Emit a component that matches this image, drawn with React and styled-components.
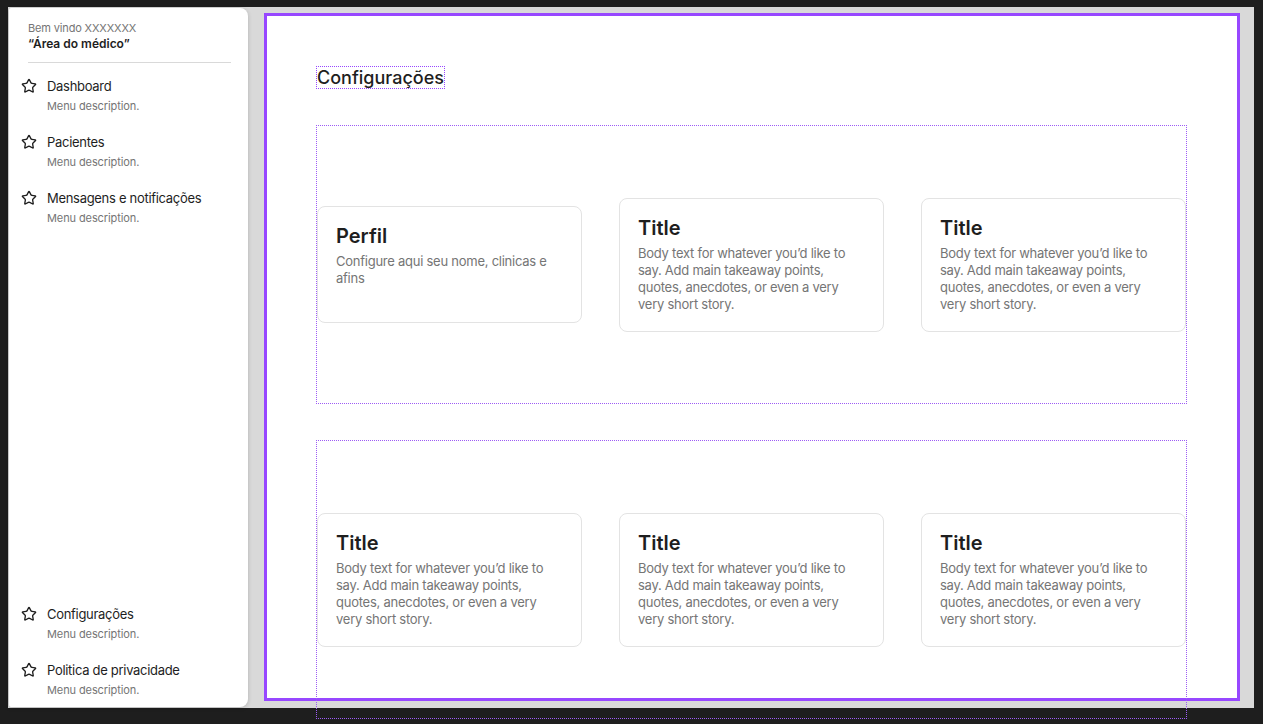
import React from "react";
import styled, { createGlobalStyle, css } from "styled-components";
import { Star } from "lucide-react";

const GlobalStyle = createGlobalStyle`
  html, body {
    margin: 0;
    padding: 0;
    background: #1e1e1e;
    min-height: 100vh;
  }
  body {
    font-family: Inter, "Noto Sans", sans-serif;
    color: #1e1e1e;
  }
  #root {
    min-height: 100vh;
    padding: 7px 0 0 8px;
  }
  * { box-sizing: border-box; }
`;

// crisp 1px-on / 1px-off selection outline, like the design tool draws it
const dotted = (c) => css`
  padding: 1px;
  background:
    repeating-linear-gradient(90deg, ${c} 0 1px, transparent 1px 2px) top left / 100% 1px no-repeat,
    repeating-linear-gradient(90deg, ${c} 0 1px, transparent 1px 2px) bottom left / 100% 1px no-repeat,
    repeating-linear-gradient(180deg, ${c} 0 1px, transparent 1px 2px) top left / 1px 100% no-repeat,
    repeating-linear-gradient(180deg, ${c} 0 1px, transparent 1px 2px) top right / 1px 100% no-repeat;
`;

const Frame = styled.div`
  width: 1246px;
  height: 701px;
  background: #d9d9d9;
  display: flex;
  align-items: flex-start;
  padding-left: 1px;
`;

const Sidebar = styled.aside`
  margin-top: 1px;
  width: 239px;
  height: 699px;
  background: #fff;
  border-radius: 2px 8px 8px 2px;
  box-shadow: 0 1px 4px rgba(0, 0, 0, 0.18);
  display: flex;
  flex-direction: column;
  padding: 13px 0 10px 0;
`;

const Header = styled.div`
  padding: 0 17px 0 19px;
`;

const Welcome = styled.div`
  font-size: 11px;
  line-height: 15px;
  color: #757575;
  letter-spacing: -0.15px;
`;

const Area = styled.div`
  font-size: 12px;
  line-height: 16px;
  font-weight: 600;
  color: #1e1e1e;
`;

const Divider = styled.hr`
  margin: 10px 0 0 0;
  border: none;
  border-top: 1px solid #d9d9d9;
`;

const Nav = styled.nav`
  display: flex;
  flex-direction: column;
  gap: 21px;
  padding-left: 12px;
  margin-top: ${(p) => (p.$bottom ? "auto" : "15px")};
`;

const Item = styled.a`
  display: flex;
  gap: 10px;
  align-items: flex-start;
  text-decoration: none;
  cursor: pointer;

  svg {
    flex: 0 0 16px;
    color: #1e1e1e;
  }
`;

const ItemText = styled.div`
  display: flex;
  flex-direction: column;
  gap: 5px;
`;

const ItemTitle = styled.span`
  font-size: 13px;
  line-height: 16px;
  letter-spacing: -0.3px;
  color: #1e1e1e;
`;

const ItemDesc = styled.span`
  font-size: 11px;
  line-height: 14px;
  letter-spacing: -0.1px;
  color: #757575;
`;

const Panel = styled.main`
  margin: 6px 0 0 16px;
  width: 976px;
  height: 688px;
  border: 3px solid #9747ff;
  background: #fff;
  padding: 50px 50px 0 49px;
  display: flex;
  flex-direction: column;
  gap: 36px;
`;

const PageTitle = styled.h1`
  align-self: flex-start;
  margin: 0;
  ${dotted("#9747ff")}
  font-size: 18px;
  line-height: 21px;
  font-weight: 500;
  color: #1e1e1e;
`;

const Group = styled.section`
  flex: 0 0 279px;
  ${dotted("#9d5cf5")}
  display: flex;
  align-items: center;
  gap: 37px;
`;

const Card = styled.div`
  flex: 0 0 265px;
  min-height: ${(p) => p.$minHeight || "auto"};
  border: 1px solid #e3e3e3;
  border-radius: 8px;
  background: #fff;
  padding: 17px 18px 18px;
  display: flex;
  flex-direction: column;
  gap: 5px;
`;

const CardTitle = styled.h2`
  margin: 0;
  font-size: 20px;
  line-height: 24px;
  font-weight: 600;
  color: #1e1e1e;
`;

const CardBody = styled.p`
  margin: 0;
  font-size: 13px;
  line-height: 17px;
  letter-spacing: -0.25px;
  color: #757575;
`;

const topMenu = ["Dashboard", "Pacientes", "Mensagens e notificações"];
const bottomMenu = ["Configurações", "Politica de privacidade"];

const body =
  "Body text for whatever you’d like to say. Add main takeaway points, quotes, anecdotes, or even a very very short story.";

const MenuItem = ({ label }) => (
  <Item>
    <Star size={16} strokeWidth={2} />
    <ItemText>
      <ItemTitle>{label}</ItemTitle>
      <ItemDesc>Menu description.</ItemDesc>
    </ItemText>
  </Item>
);

const App = () => (
  <>
    <GlobalStyle />
    <Frame>
      <Sidebar>
        <Header>
          <Welcome>Bem vindo XXXXXXX</Welcome>
          <Area>“Área do médico”</Area>
          <Divider />
        </Header>
        <Nav>
          {topMenu.map((m) => (
            <MenuItem key={m} label={m} />
          ))}
        </Nav>
        <Nav $bottom>
          {bottomMenu.map((m) => (
            <MenuItem key={m} label={m} />
          ))}
        </Nav>
      </Sidebar>

      <Panel>
        <PageTitle>Configurações</PageTitle>
        <Group>
          <Card $minHeight="117px">
            <CardTitle>Perfil</CardTitle>
            <CardBody>Configure aqui seu nome, clinicas e afins</CardBody>
          </Card>
          <Card>
            <CardTitle>Title</CardTitle>
            <CardBody>{body}</CardBody>
          </Card>
          <Card>
            <CardTitle>Title</CardTitle>
            <CardBody>{body}</CardBody>
          </Card>
        </Group>
        <Group>
          {[0, 1, 2].map((i) => (
            <Card key={i}>
              <CardTitle>Title</CardTitle>
              <CardBody>{body}</CardBody>
            </Card>
          ))}
        </Group>
      </Panel>
    </Frame>
  </>
);

export default App;
